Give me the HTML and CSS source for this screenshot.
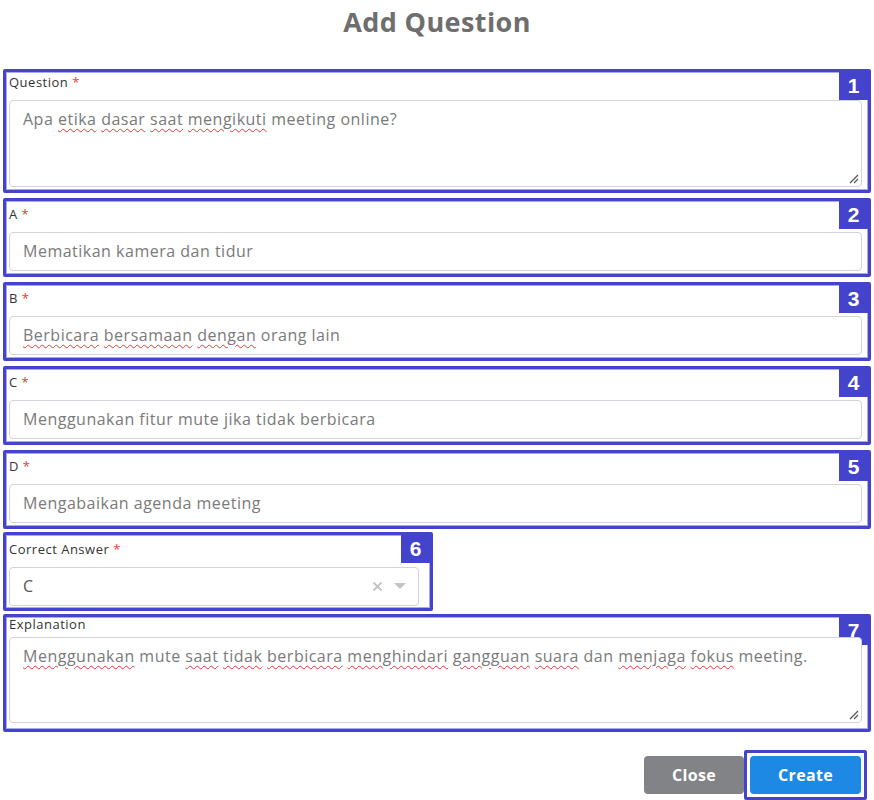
FILE: index.html
```html
<!DOCTYPE html>
<html lang="id">
<head>
<meta charset="utf-8">
<title>Add Question</title>
<link rel="stylesheet" href="styles.css">
</head>
<body>
<div class="modal">
  <h1 class="title">Add Question</h1>

  <div class="group group-question">
    <div class="badge">1</div>
    <div class="label">Question <span class="req">*</span></div>
    <div class="field area area-question">Apa <span class="sp">etika</span> <span class="sp">dasar</span> <span class="sp">saat</span> <span class="sp">mengikuti</span> meeting online?<svg class="grip" width="12" height="12" viewBox="0 0 12 12"><path d="M11 3 L3 11 M11 7 L7 11" stroke="#555" stroke-width="1.2"/></svg></div>
  </div>

  <div class="group">
    <div class="badge">2</div>
    <div class="label">A <span class="req">*</span></div>
    <div class="field input">Mematikan kamera dan tidur</div>
  </div>

  <div class="group">
    <div class="badge">3</div>
    <div class="label">B <span class="req">*</span></div>
    <div class="field input"><span class="sp">Berbicara</span> <span class="sp">bersamaan</span> <span class="sp">dengan</span> orang lain</div>
  </div>

  <div class="group">
    <div class="badge">4</div>
    <div class="label">C <span class="req">*</span></div>
    <div class="field input">Menggunakan fitur mute jika tidak berbicara</div>
  </div>

  <div class="group">
    <div class="badge">5</div>
    <div class="label">D <span class="req">*</span></div>
    <div class="field input">Mengabaikan agenda meeting</div>
  </div>

  <div class="group group-select">
    <div class="badge">6</div>
    <div class="label">Correct Answer <span class="req">*</span></div>
    <div class="field input select">
      <span class="select-value">C</span>
      <span class="select-icons">
        <svg width="11" height="11" viewBox="0 0 11 11"><path d="M1.5 1.5 L9.5 9.5 M9.5 1.5 L1.5 9.5" stroke="#c4c4c4" stroke-width="1.8"/></svg>
        <svg width="12" height="7" viewBox="0 0 12 7"><path d="M0 0 H12 L6 6 Z" fill="#c4c4c4"/></svg>
      </span>
    </div>
  </div>

  <div class="group group-expl">
    <div class="badge">7</div>
    <div class="label">Explanation</div>
    <div class="field area area-expl"><span class="sp">Menggunakan</span> mute <span class="sp">saat</span> <span class="sp">tidak</span> <span class="sp">berbicara</span> <span class="sp">menghindari</span> <span class="sp">gangguan</span> <span class="sp">suara</span> dan <span class="sp">menjaga</span> <span class="sp">fokus</span> meeting.<svg class="grip" width="12" height="12" viewBox="0 0 12 12"><path d="M11 3 L3 11 M11 7 L7 11" stroke="#555" stroke-width="1.2"/></svg></div>
  </div>

  <div class="actions">
    <button class="btn btn-close">Close</button>
    <div class="highlight">
      <button class="btn btn-create">Create</button>
    </div>
  </div>
</div>
</body>
</html>
```

FILE: styles.css
```css
html, body {
  margin: 0;
  padding: 0;
  background: #ffffff;
}

body {
  font-family: "Open Sans", "DejaVu Sans", sans-serif;
  width: 874px;
}

.modal {
  padding: 0 3px 0 3px;
}

.title {
  margin: 0;
  padding-top: 6px;
  height: 69px;
  box-sizing: border-box;
  text-align: center;
  font-size: 27px;
  letter-spacing: 0.4px;
  line-height: 32px;
  font-weight: 700;
  color: #6e6e6e;
}

.group {
  position: relative;
  width: 868px;
  box-sizing: border-box;
  border: 3px solid #4343cc;
  border-radius: 2px;
  box-shadow: inset 0 0 0 1px #a9a9ec;
  padding: 6px 6px 3px 3px;
  margin-bottom: 5px;
  background: #fff;
}

.group-question {
  padding-top: 3px;
}

.group-select {
  width: 430px;
  margin-top: -2px;
  padding-top: 7px;
  padding-bottom: 2px;
  padding-right: 11px;
  margin-bottom: 3px;
}

.group-expl {
  padding-top: 0;
  padding-bottom: 6px;
}

.group-expl .label {
  margin-bottom: 6px;
}

.badge {
  position: absolute;
  top: 0;
  right: 0;
  width: 29px;
  height: 28px;
  background: #4343cc;
  color: #ffffff;
  font-family: "Liberation Sans", Arial, sans-serif;
  font-weight: 700;
  font-size: 21px;
  line-height: 28px;
  text-align: center;
}

.label {
  font-size: 13px;
  letter-spacing: 0.5px;
  line-height: 14px;
  color: #333333;
  margin-bottom: 11px;
}

.req {
  color: #e53935;
}

.field {
  box-sizing: border-box;
  border: 1px solid #d0d4da;
  border-radius: 4px;
  background: #fff;
  color: #7a7a7a;
  font-size: 16px;
  letter-spacing: 0.5px;
  padding-left: 13px;
}

.input {
  height: 39px;
  line-height: 37px;
}

.area {
  position: relative;
  padding-top: 6px;
  line-height: 24px;
}

.area-question {
  height: 87px;
}

.area-expl {
  height: 86px;
}

.grip {
  position: absolute;
  right: 2px;
  bottom: 2px;
}

.sp {
  text-decoration: underline wavy #e53935;
  text-decoration-thickness: 1px;
  text-underline-offset: 3px;
}

.select {
  display: flex;
  align-items: center;
  justify-content: space-between;
  padding-right: 12px;
  color: #555;
}

.select-icons {
  display: flex;
  align-items: center;
  gap: 11px;
}

.actions {
  display: flex;
  justify-content: flex-end;
  align-items: center;
  margin-top: 18px;
  padding-right: 4px;
}

.btn {
  border: none;
  border-radius: 4px;
  color: #ffffff;
  font-family: "Open Sans", "DejaVu Sans", sans-serif;
  font-weight: 700;
  font-size: 16px;
  letter-spacing: 0.3px;
  height: 38px;
  cursor: pointer;
}

.btn-close {
  width: 100px;
  background: #828387;
}

.highlight {
  border: 3px solid #4343cc;
  border-radius: 2px;
  padding: 3px;
  display: flex;
}

.btn-create {
  width: 111px;
  background: #1e88e5;
  box-shadow: 0 0 0 1px #ffffff;
}
```
